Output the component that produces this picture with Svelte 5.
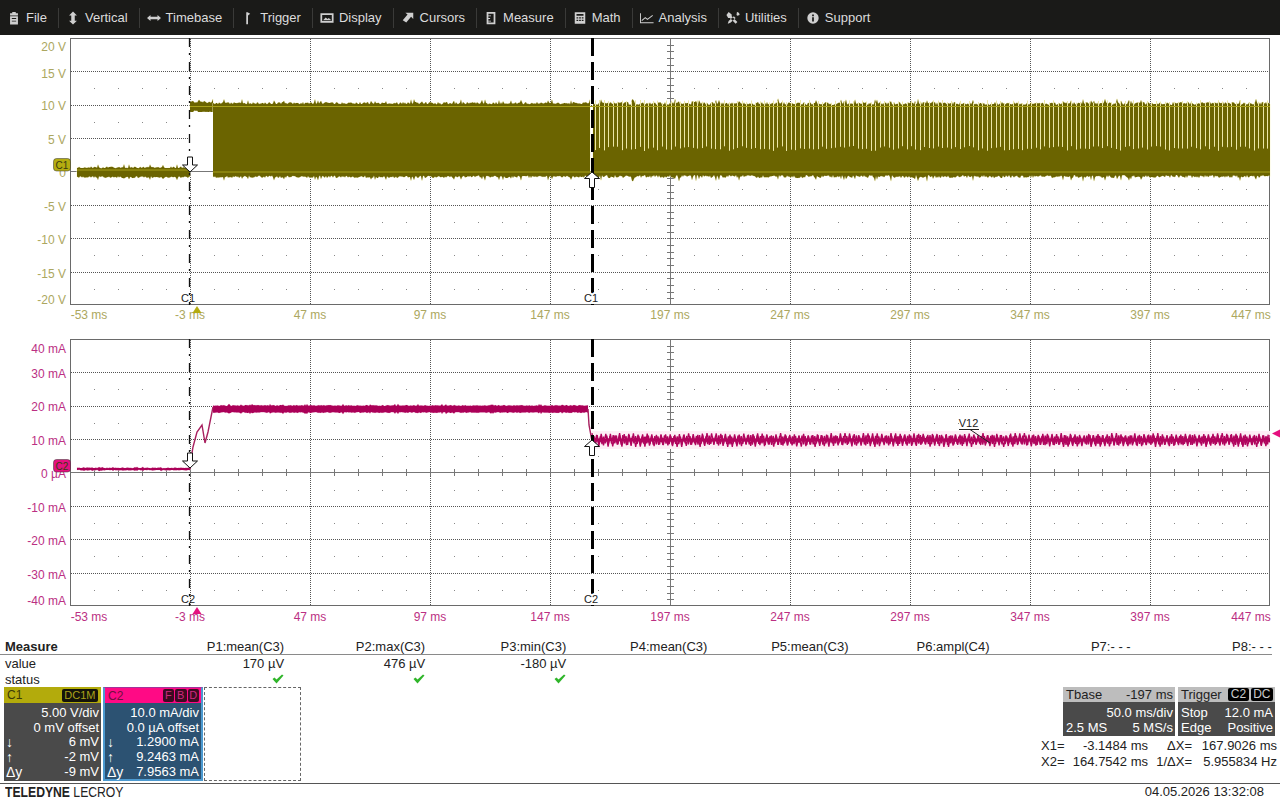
<script>
  const menu = ['File', 'Vertical', 'Timebase', 'Trigger', 'Display', 'Cursors', 'Measure', 'Math', 'Analysis', 'Utilities', 'Support'];

  function rng(seed) {
    let s = seed;
    return () => (s = (s * 16807) % 2147483647) / 2147483647;
  }

  // noisy filled band, top and bottom edges jitter a little
  function band(r, x0, x1, top, bottom, amp) {
    const up = [];
    const down = [];
    for (let x = x0; x <= x1; x += 1) {
      const spike = r() > 0.93 ? amp * 1.2 : 0;
      up.push(`${x},${(top + r() * amp - spike).toFixed(1)}`);
      down.unshift(`${x},${(bottom - r() * amp + spike).toFixed(1)}`);
    }
    return up.concat(down).join(' ');
  }

  function wiggle(r, x0, x1, mid, amp, period) {
    const pts = [];
    let up = true;
    for (let x = x0; x <= x1; x += period / 2) {
      const a = amp * (0.65 + r() * 0.35);
      pts.push(`${x.toFixed(1)},${(mid + (up ? -a : a)).toFixed(1)}`);
      up = !up;
    }
    return pts.join(' ');
  }

  const r1 = rng(4711);
  const r2 = rng(1871);

  // chart-local y is screen y - 36 (first) or - 337 (second)
  const olive = [
    band(r1, 77, 190, 130.5, 142, 1.8),
    band(r1, 190, 213, 65, 76.5, 2),
    band(r1, 213, 590, 66, 142, 2.4),
    band(r1, 593, 1270, 66, 142, 3)
  ];

  const gaps = [];
  for (let x = 595; x < 1270; x += 4.45) {
    gaps.push({ x: Math.round(x) + 0.5, y1: 64 + r1() * 3, y2: 110 + r1() * 5 });
  }

  const crimson = [
    band(r2, 77, 190, 130.5, 133.5, 0.7),
    band(r2, 213, 588, 68, 76, 1),
    band(r2, 592, 1270, 101, 105, 1)
  ];
  const rise = '190,132 192,116 193,110 197,95 202,88 205,106 208,95 213,70';
  const fall = '588,72 589,88 592,104';
  const ripple = [wiggle(r2, 592, 1270, 103, 7, 4.6), wiggle(r2, 594, 1270, 103, 5, 3.2)];

  const divX = [190, 310, 430, 550, 790, 910, 1030, 1150];
  const divY = [35.4, 68.8, 102.1, 168.9, 202.3, 235.6];
  const dotY = [52, 86, 119, 153, 186, 219, 253];
  const tickX = [];
  for (let x = 94; x < 1270; x += 24) tickX.push(x);
  const tickY = [];
  for (let y = 2; y < 269; y += 6.675) tickY.push(y);
  const dots = tickX.filter((x) => (x - 70) % 120 !== 0);

  const xLabels = [
    [89, '-53 ms'], [190, '-3 ms'], [310, '47 ms'], [430, '97 ms'], [550, '147 ms'], [670, '197 ms'],
    [790, '247 ms'], [910, '297 ms'], [1030, '347 ms'], [1150, '397 ms'], [1251, '447 ms']
  ];

  const voltLabels = [[15, '20 V'], [42, '15 V'], [74, '10 V'], [108, '5 V'], [141, '0'], [175, '-5 V'], [208, '-10 V'], [242, '-15 V'], [268, '-20 V']];
  const ampLabels = [[16, '40 mA'], [41, '30 mA'], [74, '20 mA'], [108, '10 mA'], [141, '0 µA'], [175, '-10 mA'], [208, '-20 mA'], [242, '-30 mA'], [268, '-40 mA']];

  const headers = ['P1:mean(C3)', 'P2:max(C3)', 'P3:min(C3)', 'P4:mean(C3)', 'P5:mean(C3)', 'P6:ampl(C4)', 'P7:- - -', 'P8:- - -'];
  const values = ['170 µV', '476 µV', '-180 µV'];

  const c1Rows = [['', '5.00 V/div'], ['', '0 mV offset'], ['↓', '6 mV'], ['↑', '-2 mV'], ['Δy', '-9 mV']];
  const c2Rows = [['', '10.0 mA/div'], ['', '0.0 µA offset'], ['↓', '1.2900 mA'], ['↑', '9.2463 mA'], ['Δy', '7.9563 mA']];
</script>

{#snippet grid()}
  {#each divX as x}
    <line class="dotted" x1={x + 0.5} x2={x + 0.5} y1="3" y2="269" />
  {/each}
  {#each divY as y}
    <line class="dotted" x1="71" x2="1270" y1={Math.round(y) + 0.5} y2={Math.round(y) + 0.5} />
  {/each}
  {#each dotY as y}
    {#each dots as x}
      <rect class="dot" x={x} y={y} width="1" height="1" />
    {/each}
  {/each}
  <line class="axis" x1="70" x2="1270" y1="135.5" y2="135.5" />
  <line class="axis" x1="670.5" x2="670.5" y1="2" y2="269" />
  {#each tickX as x}
    <line class="axis" x1={x + 0.5} x2={x + 0.5} y1="132" y2="139" />
  {/each}
  {#each tickY as y}
    <line class="axis" x1="667" x2="674" y1={Math.round(y) + 0.5} y2={Math.round(y) + 0.5} />
  {/each}
{/snippet}

{#snippet cursors(name, y1, y2)}
  <line class="cursor-a" x1="189.5" x2="189.5" y1="2" y2="269" />
  <line class="cursor-b" x1="592.5" x2="592.5" y1="2" y2="269" />
  <path class="arrow" d="M187.5 {y1 - 15}h5v8h5l-7.500 7-7.500-7h5z" />
  <path class="arrow" d="M592 {y2}l7.500 6.500h-5v9h-5v-9h-5z" />
  <text class="cname" x="188" y="266">{name}</text>
  <text class="cname halo" x="591" y="266">{name}</text>
{/snippet}

{#snippet frame(labels, cls, xy)}
  <rect class="frame" x="70.500" y="2.500" width="1199" height="266" />
  {#each labels as [y, text]}
    <text class="ylabel {cls}" x="66" y={y}>{text}</text>
  {/each}
  {#each xLabels as [x, text]}
    <text class="xlabel {cls}" x={x} y={xy}>{text}</text>
  {/each}
{/snippet}

<div class="scope">
  <nav class="menu">
    {#each menu as item, i}
      <div class="item">
        <svg class="icon" width="14" height="14" viewBox="0 0 16 16">
          {#if i === 0}
            <path d="M6 1h4v1.500h2.500v2.500h-9V2.500H6zM3.500 6h9v9.500h-9z M5.500 8v1h5V8zM5.500 11v1h5v-1z" fill-rule="evenodd" />
          {:else if i === 1}
            <path d="M8 0.500l4.500 4.500H10v6h2.500L8 15.500 3.500 11H6V5H3.500z" />
          {:else if i === 2}
            <path d="M0 8l4-3.500v2h8v-2L16 8l-4 3.500v-2H4v2z" />
          {:else if i === 3}
            <path d="M6 1.500h1.500l3 1.500L8 5V15H6z" />
          {:else if i === 4}
            <path d="M0.500 2.500h15v11h-15zM2.500 4.500v7h11v-7zM3.500 10.500l3-3 2 1.500 1.500-1 3 2.500z" fill-rule="evenodd" />
          {:else if i === 5}
            <path d="M14 2v7l-2.500-2.500-5.500 6.500-4-2.500 5.500-6.500L5 2z" />
          {:else if i === 6}
            <path d="M3 1h10v14H3zM5 3v10h6V3zM5 5h3v1H5zM5 8h2v1H5zM5 11h3v1H5z" fill-rule="evenodd" />
          {:else if i === 7}
            <path d="M2 1.500h12v13H2zM4 3.500v2h8v-2zM4 7v1.500h2V7zM7 7v1.500h2V7zM10 7v1.500h2V7zM4 10v1.500h2V10zM7 10v1.500h2V10zM10 10v1.500h2V10z" fill-rule="evenodd" />
          {:else if i === 8}
            <path class="line" d="M0.500 2.500v11h15M2 11l4-3.500 2.500 2L14.500 5" />
          {:else if i === 9}
            <path d="M3 1l3.500 3v2l6.500 6.500-2 2L4.500 8h-2L0.500 4.500zM12.500 1a3.500 3.500 0 0 1 3 3.500l-2.500 1-1-1 .500-3.500zM9 6l-6 5.500-1 3 3-1L11 8z" />
          {:else}
            <path d="M8 1.500a6.500 6.500 0 1 0 0 13A6.500 6.500 0 0 0 8 1.500zM7 4h2v2H7zM7 7h2v5H7z" fill-rule="evenodd" />
          {/if}
        </svg>
        <span>{item}</span>
      </div>
    {/each}
  </nav>

  <svg class="chart" viewBox="0 0 1280 301" width="1280" height="301">
    {@render grid()}
    {@render frame(voltLabels, 'volt', 283)}
    {#each olive as points}
      <polygon class="olive" {points} />
    {/each}
    <rect x="190" y="76" width="23" height="60" fill="#fff" />
    <line class="axis" x1="190" x2="213" y1="135.5" y2="135.5" />
    {#each gaps as g}
      <line class="gap" x1={g.x} x2={g.x} y1={g.y1} y2={g.y2} />
    {/each}
    <line class="glint" x1="77" x2="190" y1="134" y2="134" />
    <line class="glint" x1="190" x2="1270" y1="70.500" y2="70.500" />
    <line class="glint" x1="213" x2="1270" y1="136" y2="136" />
    {@render cursors('C1', 136, 136)}
    <rect class="badge c1" x="53.500" y="122.500" width="17" height="12.500" rx="3" />
    <text class="badge-text" x="62" y="132.500">C1</text>
    <path class="mark c1" d="M197 270l4.500 7h-9z" />
  </svg>

  <svg class="chart" viewBox="0 0 1280 301" width="1280" height="301">
    {@render grid()}
    {@render frame(ampLabels, 'amp', 284)}
    <rect class="ripple-glow" x="592" y="94" width="678" height="18" />
    {#each crimson as points}
      <polygon class="crimson" {points} />
    {/each}
    {#each ripple as points}
      <polyline class="trace-ripple" {points} />
    {/each}
    <polyline class="trace-thin" points={rise} />
    <polyline class="trace-thin" points={fall} />
    {@render cursors('C2', 131, 103)}
    <rect class="badge c2" x="53.500" y="122.500" width="17" height="12.500" rx="3" />
    <text class="badge-text" x="62" y="132.500">C2</text>
    <path class="mark c2" d="M197 270l4.500 7h-9z" />
    <text class="tag-name" x="968.500" y="90">V12</text>
    <path class="leader" d="M959 92.500h20M970 92.500l20 13.500" />
    <path class="mark c2" d="M1272 96.500l8-4v8z" />
  </svg>

  <section class="measure">
    <div class="cell head">Measure</div>
    {#each headers as h}<div class="cell num head-num">{h}</div>{/each}
    <div class="rule"></div>
    <div class="cell">value</div>
    {#each headers as _, i}<div class="cell num">{values[i] ?? ''}</div>{/each}
    <div class="cell">status</div>
    {#each headers as _, i}
      <div class="cell num">
        {#if i < 3}
          <svg class="check" width="12" height="10" viewBox="0 0 12 10"><path d="M0.500 5l2-1.500 2 2L10 0.500l1.500 1L4.500 9.500z" /></svg>
        {/if}
      </div>
    {/each}
  </section>

  <section class="panels">
    <div class="channel one">
      <header><span>C1</span><b class="pill">DC1M</b></header>
      <div class="rows">
        {#each c1Rows as [k, v]}
          <div class="row"><span class="key">{k}</span><span>{v}</span></div>
        {/each}
      </div>
    </div>
    <div class="channel two">
      <header><span>C2</span><span class="pills"><b>F</b><b>B</b><b>D</b></span></header>
      <div class="rows">
        {#each c2Rows as [k, v]}
          <div class="row"><span class="key">{k}</span><span>{v}</span></div>
        {/each}
      </div>
    </div>
    <div class="empty"></div>

    <div class="readout">
      <div class="blocks">
        <div class="block tbase">
          <div class="top"><span>Tbase</span><span>-197 ms</span></div>
          <div class="row end"><span>50.0 ms/div</span></div>
          <div class="row"><span>2.5 MS</span><span>5 MS/s</span></div>
        </div>
        <div class="block trigger">
          <div class="top"><span>Trigger</span><span class="tags"><b>C2</b><b>DC</b></span></div>
          <div class="row"><span>Stop</span><span>12.0 mA</span></div>
          <div class="row"><span>Edge</span><span>Positive</span></div>
        </div>
      </div>
      <div class="xrow"><span class="k1">X1=</span><span class="v1">-3.1484 ms</span><span class="k2">ΔX=</span><span class="v2">167.9026 ms</span></div>
      <div class="xrow"><span class="k1">X2=</span><span class="v1">164.7542 ms</span><span class="k2">1/ΔX=</span><span class="v2">5.955834 Hz</span></div>
    </div>
  </section>

  <footer class="foot">
    <span class="brand"><b>TELEDYNE</b> LECROY</span>
    <span>04.05.2026 13:32:08</span>
  </footer>
</div>

<style>
  :global(body) {
    margin: 0;
    background: #fff;
  }

  .scope {
    width: 1280px;
    height: 800px;
    overflow: hidden;
    background: #fff;
    color: #222;
    font-family: "Liberation Sans", Arial, sans-serif;
    font-size: 13px;
  }

  .menu {
    display: flex;
    height: 35px;
    background: #1a1a18;
    color: #dcdcdc;
    font-size: 13px;
  }

  .item {
    display: flex;
    align-items: center;
    gap: 5px;
    padding: 0 12px 0 7px;
    position: relative;
  }

  .item::after {
    content: "";
    position: absolute;
    right: 0;
    top: 8px;
    bottom: 7px;
    width: 1px;
    background: #3a3a38;
  }

  .item:last-child::after {
    display: none;
  }

  .icon path {
    fill: #cfcfcf;
  }

  .icon path.line {
    fill: none;
    stroke: #cfcfcf;
    stroke-width: 1.2;
  }

  .chart {
    display: block;
  }

  .menu + .chart {
    margin-top: 1px;
  }

  .frame {
    fill: none;
    stroke: #6a6a6a;
  }

  .dotted {
    stroke: #555;
    stroke-dasharray: 1 1;
  }

  .dot {
    fill: #888;
  }

  .axis {
    stroke: #777;
  }

  .ylabel {
    text-anchor: end;
  }

  .xlabel {
    text-anchor: middle;
  }

  .volt {
    fill: #aca760;
  }

  .amp {
    fill: #bb2f83;
  }

  .chart text {
    font-size: 12px;
  }

  .chart .cname {
    font-size: 11px;
    fill: #222;
    text-anchor: middle;
  }

  .chart .halo {
    stroke: #fff;
    stroke-width: 4px;
    paint-order: stroke;
  }

  .chart .tag-name {
    font-size: 11px;
    fill: #222;
    text-anchor: middle;
  }

  .olive {
    fill: #6b6400;
    stroke: #fbf8cf;
    stroke-width: 0.8;
    paint-order: stroke;
  }

  .gap {
    stroke: #ece7a6;
    stroke-width: 1;
  }

  .glint {
    stroke: #a9a11a;
    stroke-width: 1;
  }

  .crimson {
    fill: #ab0058;
    stroke: #f9d5e6;
    stroke-width: 0.6;
    paint-order: stroke;
  }

  .ripple-glow {
    fill: #fdeef5;
  }

  .trace-thin {
    fill: none;
    stroke: #a8205f;
    stroke-width: 1.4;
  }

  .trace-ripple {
    fill: none;
    stroke: #b1045e;
    stroke-width: 1.3;
  }

  .cursor-a {
    stroke: #111;
    stroke-width: 1.3;
    stroke-dasharray: 9 6 2 7;
  }

  .cursor-b {
    stroke: #000;
    stroke-width: 3;
    stroke-dasharray: 18 6;
  }

  .arrow {
    fill: #fff;
    stroke: #111;
    stroke-width: 1;
  }

  .badge {
    stroke: #333;
    stroke-width: 0.5;
  }

  .badge.c1,
  .mark.c1 {
    fill: #b4ac10;
  }

  .badge.c2,
  .mark.c2 {
    fill: #e5107f;
  }

  .chart .badge-text {
    font-size: 10px;
    text-anchor: middle;
    fill: #3a3a10;
  }

  .leader {
    fill: none;
    stroke: #222;
  }

  .measure {
    display: grid;
    grid-template-columns: 138px repeat(8, 141.1px);
    padding-left: 5px;
    height: 49px;
    line-height: 17px;
  }

  .cell {
    height: 16px;
    white-space: nowrap;
  }

  .head,
  .head-num {
    line-height: 18px;
  }

  .head {
    font-weight: bold;
  }

  .num {
    text-align: right;
  }

  .rule {
    grid-column: 1 / -1;
    height: 1px;
    margin-left: -5px;
    background: #8a8a8a;
  }

  .check {
    vertical-align: 0;
  }

  .check path {
    fill: #2fb52a;
  }

  .panels {
    display: flex;
    height: 95px;
    padding-left: 4px;
    color: #fff;
  }

  .channel {
    box-sizing: border-box;
    height: 94px;
  }

  .channel header {
    display: flex;
    justify-content: space-between;
    align-items: center;
    height: 16px;
    padding: 0 3px;
    font-size: 12px;
    color: #3c3a08;
  }

  .rows {
    padding-top: 3px;
    line-height: 14.700px;
  }

  .channel .row {
    display: flex;
    justify-content: space-between;
    height: 14.700px;
    padding: 0 2px 0 2px;
  }

  .key {
    font-size: 14px;
  }

  .one {
    width: 97px;
    margin-right: 2px;
    background: #4a4a4a;
  }

  .one header {
    background: #b3ab0c;
  }

  .pill {
    font-weight: normal;
    font-size: 11px;
    line-height: 13px;
    padding: 0 2.500px;
    background: #14140a;
    color: #a9a21a;
    border-radius: 2px;
  }

  .two {
    width: 100px;
    margin-right: 1px;
    background: #2c5272;
    border: 2px solid #4d9ad0;
    border-top: 1px solid #a3329a;
  }

  .two header {
    background: #ff0a85;
    color: #70103f;
    height: 15px;
    padding-right: 2px;
  }

  .pills {
    display: flex;
    gap: 1px;
  }

  .pills b {
    font-weight: normal;
    font-size: 11px;
    line-height: 13px;
    width: 11.500px;
    text-align: center;
    background: #3c0a22;
    color: #d0287e;
    border-radius: 2px;
  }

  .empty {
    box-sizing: border-box;
    width: 97px;
    height: 94px;
    border: 1px dashed #666;
  }

  .readout {
    margin-left: auto;
    box-sizing: border-box;
    padding-right: 3px;
    width: 239px;
    color: #222;
  }

  .blocks {
    display: flex;
    justify-content: flex-end;
    gap: 3px;
    height: 50px;
    margin-right: 2px;
  }

  .block {
    height: 49px;
    background: #4a4a4a;
    color: #fff;
  }

  .block .top {
    display: flex;
    justify-content: space-between;
    align-items: center;
    height: 15px;
    margin-bottom: 3px;
    padding: 0 2px 0 3px;
    background: #bdbdbd;
    color: #222;
  }

  .block .row {
    display: flex;
    justify-content: space-between;
    height: 15px;
    line-height: 15px;
    padding: 0 2px 0 3px;
    white-space: nowrap;
  }

  .block .row.end {
    justify-content: flex-end;
  }

  .tbase {
    width: 112px;
  }

  .trigger {
    width: 97px;
  }

  .tags {
    display: flex;
    gap: 2px;
  }

  .tags b {
    font-weight: normal;
    font-size: 12px;
    line-height: 13px;
    padding: 0 2.500px;
    background: #000;
    color: #ccc;
    border-radius: 2px;
  }

  .xrow {
    display: grid;
    grid-template-columns: 22px 85px 44px 85px;
    height: 15.500px;
    line-height: 17px;
  }

  .v1,
  .k2,
  .v2 {
    text-align: right;
    white-space: nowrap;
  }

  .foot {
    display: flex;
    justify-content: space-between;
    box-sizing: border-box;
    height: 17px;
    margin-top: 1px;
    padding: 0 16px 0 5px;
    border-top: 1px solid #555;
    line-height: 16px;
  }

  .brand {
    display: inline-block;
    font-size: 14.500px;
    color: #222;
    white-space: nowrap;
    transform: scaleX(0.84);
    transform-origin: left center;
  }
</style>
